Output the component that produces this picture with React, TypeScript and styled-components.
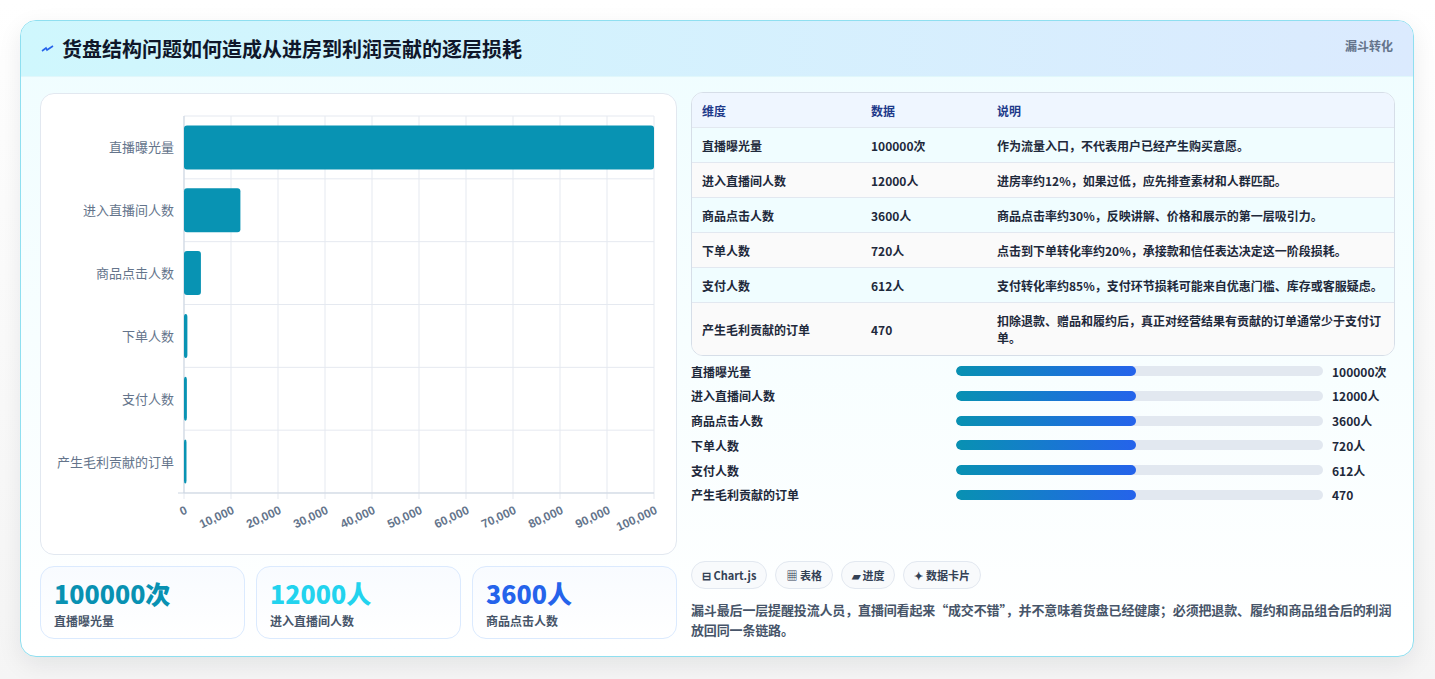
import React from "react";
import styled, { createGlobalStyle } from "styled-components";

const Global = createGlobalStyle`
  html, body { margin: 0; padding: 0; background: #f3f4f6; }
  body { font-family: "Noto Sans CJK SC", "Noto Sans", sans-serif; }
`;

const Page = styled.div`
  width: 1435px; height: 679px; box-sizing: border-box;
  padding: 20px 21px 22px 20px;
  background: linear-gradient(180deg, #ffffff 0%, #f5f5f5 100%);
`;
const Card = styled.div`
  height: 100%; box-sizing: border-box;
  border: 1px solid #8fdff0; border-radius: 16px; overflow: hidden;
  background: linear-gradient(180deg, #effdff 0%, #ffffff 100%);
  box-shadow: 0 8px 24px rgba(15, 23, 42, 0.08);
  display: flex; flex-direction: column;
`;
const Header = styled.div`
  height: 55px; flex: none; display: flex; align-items: center; justify-content: space-between;
  padding: 0 20px;
  background: linear-gradient(90deg, #cff7fd 0%, #dbeafe 100%);
  border-bottom: 1px solid #e0f7fb;
`;
const Title = styled.h1`
  margin: 0; font-size: 20px; font-weight: 700; color: #0f172a;
  display: flex; align-items: center; gap: 8px;
`;
const Badge = styled.span`
  font-size: 12px; font-weight: 700; color: #64748b; align-self: flex-start; margin-top: 16px;
`;
const Body = styled.div`
  flex: 1; display: grid; grid-template-columns: 637px 704px; gap: 14px;
  padding: 16px 18px 16px 19px;
`;
const Col = styled.div`display: flex; flex-direction: column;`;
const ChartBox = styled.div`
  height: 462px; box-sizing: border-box; background: #fff;
  border: 1px solid #e2e8f0; border-radius: 14px;
`;
const Stats = styled.div`display: grid; grid-template-columns: repeat(3, 1fr); gap: 11px; margin-top: 11px;`;
const Stat = styled.div`
  height: 73px; box-sizing: border-box; border: 1px solid #dbeafe; border-radius: 14px;
  background: linear-gradient(180deg, #f8fbff, #ffffff); padding: 9px 13px;
`;
const StatNum = styled.div<{ $c: string }>`
  font-size: 25px; font-weight: 800; color: ${p => p.$c}; line-height: 34px;
`;
const StatLabel = styled.div`font-size: 12px; font-weight: 600; color: #475569; margin-top: 2px;`;

const Table = styled.div`
  border: 1px solid #d6dee8; border-radius: 12px; overflow: hidden; background: #fff;
  margin-top: -1px;
`;
const Row = styled.div<{ $bg: string; $h?: number }>`
  display: grid; grid-template-columns: 169px 126px 1fr; align-items: center;
  min-height: ${p => p.$h ?? 34}px; background: ${p => p.$bg};
  border-top: 1px solid #e2e8f0; padding: 0 10px; box-sizing: border-box;
  font-size: 12px; font-weight: 600; color: #1e293b; line-height: 17px;
  &:first-child { border-top: none; }
`;
const HeadRow = styled(Row)`color: #1e3a8a; font-weight: 700;`;
const Cell = styled.div`padding: 3px 0;`;

const Bars = styled.div`display: flex; flex-direction: column; gap: 6.8px; margin-top: 6px;`;
const BarRow = styled.div`
  display: grid; grid-template-columns: 265px 376px 1fr; align-items: center;
  height: 18px; font-size: 12px; font-weight: 600; color: #1e293b;
`;
const Track = styled.div`height: 10px; border-radius: 5px; background: #e2e8f0; overflow: hidden; margin-right: 9px;`;
const Fill = styled.div`height: 100%; border-radius: 5px; background: linear-gradient(90deg, #0891b2, #2563eb);`;
const Val = styled.span`font-weight: 700; color: #1e293b;`;

const Tags = styled.div`display: flex; gap: 8px; margin-top: auto;`;
const Tag = styled.span`
  height: 28px; box-sizing: border-box; padding: 0 10px; border: 1px solid #e2e8f0;
  border-radius: 14px; background: #f8fafc; font-size: 11px; font-weight: 700; color: #334155;
  display: flex; align-items: center; gap: 3px;
`;
const Para = styled.p`
  margin: 11px 0 0; font-size: 13px; line-height: 20px; font-weight: 600; color: #475569;
  letter-spacing: -0.15px;
`;

const cats = ["直播曝光量", "进入直播间人数", "商品点击人数", "下单人数", "支付人数", "产生毛利贡献的订单"];
const vals = [100000, 12000, 3600, 720, 612, 470];
const units = ["100000次", "12000人", "3600人", "720人", "612人", "470"];
const desc = [
  "作为流量入口，不代表用户已经产生购买意愿。",
  "进房率约12%，如果过低，应先排查素材和人群匹配。",
  "商品点击率约30%，反映讲解、价格和展示的第一层吸引力。",
  "点击到下单转化率约20%，承接款和信任表达决定这一阶段损耗。",
  "支付转化率约85%，支付环节损耗可能来自优惠门槛、库存或客服疑虑。",
  "扣除退款、赠品和履约后，真正对经营结果有贡献的订单通常少于支付订单。",
];

function Chart() {
  const x0 = 143, x1 = 613, y0 = 22, y1 = 399;
  const rowH = (y1 - y0) / 6;
  const font = "Liberation Sans, Arial, sans-serif";
  return (
    <svg width="637" height="460" viewBox="0 0 637 460">
      {Array.from({ length: 11 }).map((_, i) => {
        const x = x0 + ((x1 - x0) * i) / 10;
        return <line key={i} x1={x} x2={x} y1={y0} y2={y1 + 6} stroke="#e5e9f0" />;
      })}
      {Array.from({ length: 7 }).map((_, i) => (
        <line key={i} x1={x0} x2={x1} y1={y0 + rowH * i} y2={y0 + rowH * i} stroke="#e5e9f0" />
      ))}
      <line x1={x0 - 6} x2={x1} y1={y1} y2={y1} stroke="#cbd5e1" />
      <line x1={x0} x2={x0} y1={y0} y2={y1} stroke="#cbd5e1" />
      {vals.map((v, i) => {
        const w = Math.max(((x1 - x0) * v) / 100000, 2.5);
        const cy = y0 + rowH * (i + 0.5);
        return (
          <g key={i}>
            <rect x={x0} y={cy - 22} width={w} height={44} rx={3} fill="#0893b3" />
            <text x={x0 - 10} y={cy + 5} textAnchor="end" fontSize="13" fill="#64748b"
              fontFamily="Noto Sans CJK SC, sans-serif">{cats[i]}</text>
          </g>
        );
      })}
      {Array.from({ length: 11 }).map((_, i) => {
        const x = x0 + ((x1 - x0) * i) / 10;
        const label = i === 0 ? "0" : (i * 10000).toLocaleString("en-US");
        return (
          <text key={i} x={x + 4} y={y1 + 20} textAnchor="end" fontSize="12" fontWeight="700"
            fill="#64748b" fontFamily={font} transform={`rotate(-25 ${x + 4} ${y1 + 20})`}>{label}</text>
        );
      })}
    </svg>
  );
}

export default function App() {
  return (
    <Page>
      <Global />
      <Card>
        <Header>
          <Title>
            <svg width="13" height="10" viewBox="0 0 13 10"><path d="M1 7 L5 4 L6 6 L12 2" stroke="#2563eb" strokeWidth="1.6" fill="none" /></svg>
            货盘结构问题如何造成从进房到利润贡献的逐层损耗
          </Title>
          <Badge>漏斗转化</Badge>
        </Header>
        <Body>
          <Col>
            <ChartBox><Chart /></ChartBox>
            <Stats>
              <Stat><StatNum $c="#0891b2">100000次</StatNum><StatLabel>直播曝光量</StatLabel></Stat>
              <Stat><StatNum $c="#22d3ee">12000人</StatNum><StatLabel>进入直播间人数</StatLabel></Stat>
              <Stat><StatNum $c="#2563eb">3600人</StatNum><StatLabel>商品点击人数</StatLabel></Stat>
            </Stats>
          </Col>
          <Col>
            <Table>
              <HeadRow $bg="#eff6ff"><Cell>维度</Cell><Cell>数据</Cell><Cell>说明</Cell></HeadRow>
              {cats.map((c, i) => (
                <Row key={c} $bg={i % 2 === 0 ? "#f0fdff" : "#fafafa"} $h={i === 5 ? 53 : 35}>
                  <Cell>{c}</Cell><Cell>{units[i]}</Cell><Cell>{desc[i]}</Cell>
                </Row>
              ))}
            </Table>
            <Bars>
              {cats.map((c, i) => (
                <BarRow key={c}>
                  <span>{c}</span>
                  <Track><Fill style={{ width: "49%" }} /></Track>
                  <Val>{units[i]}</Val>
                </BarRow>
              ))}
            </Bars>
            <Tags>
              <Tag>⊟ Chart.js</Tag>
              <Tag>▦ 表格</Tag>
              <Tag>▰ 进度</Tag>
              <Tag>✦ 数据卡片</Tag>
            </Tags>
            <Para>漏斗最后一层提醒投流人员，直播间看起来“成交不错”，并不意味着货盘已经健康；必须把退款、履约和商品组合后的利润放回同一条链路。</Para>
          </Col>
        </Body>
      </Card>
    </Page>
  );
}
